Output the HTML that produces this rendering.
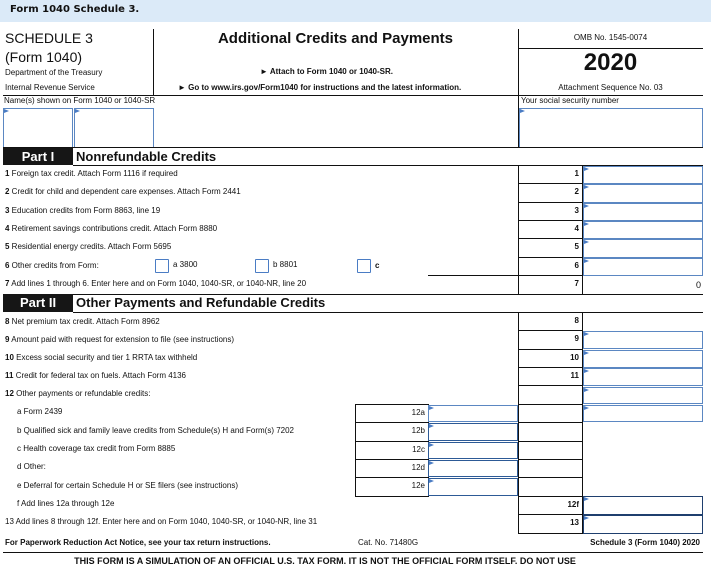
<!DOCTYPE html>
<html><head><meta charset="utf-8"><style>
*{margin:0;padding:0;box-sizing:border-box}
body{width:711px;height:563px;overflow:hidden;background:#fff;position:relative;font-family:"Liberation Sans",Arial,sans-serif;color:#111}
.a{position:absolute;white-space:nowrap}
.t{position:absolute;white-space:nowrap;font-size:8px;line-height:10px}
.h{position:absolute;height:0;border-top:1.5px solid #111}
.v{position:absolute;width:0;border-left:1.5px solid #111}
.in{position:absolute;border:1.5px solid #5b87c2;background:#fff}
.in:before{content:"";position:absolute;left:0;top:0;border-left:5px solid #4a7cc4;border-top:2.5px solid transparent;border-bottom:2.5px solid transparent}
.nc{position:absolute;border:1.5px solid #111;font-size:8px;font-weight:bold;text-align:right;padding-right:3px;line-height:16px}
.cb{position:absolute;width:14px;height:14px;border:1.5px solid #4a7cc4;border-radius:1px}
b{font-weight:bold}
</style></head><body>
<div class="a" style="left:0;top:0;width:711px;height:22px;background:#dbeaf8"></div>
<div class="a" style="left:10px;top:3px;font-family:'DejaVu Sans',sans-serif;font-weight:bold;font-size:10px;line-height:14px">Form 1040 Schedule 3.</div>

<div class="v" style="left:153px;top:29px;height:66px"></div>
<div class="v" style="left:518px;top:29px;height:118px"></div>
<div class="h" style="left:518px;top:48px;width:185px"></div>
<div class="h" style="left:3px;top:95px;width:700px"></div>
<div class="a" style="left:5px;top:30px;font-size:14px;line-height:16px">SCHEDULE 3</div>
<div class="a" style="left:5px;top:49px;font-size:14px;line-height:16px">(Form 1040)</div>
<div class="t" style="left:5px;top:68px">Department of the Treasury</div>
<div class="t" style="left:5px;top:83px">Internal Revenue Service</div>
<div class="a" style="left:153px;width:365px;text-align:center;top:30px;font-size:15px;font-weight:bold;line-height:18px">Additional Credits and Payments</div>
<div class="t" style="left:260px;top:67px;font-weight:bold">► Attach to Form 1040 or 1040-SR.</div>
<div class="t" style="left:178px;top:83px;font-weight:bold">► Go to www.irs.gov/Form1040 for instructions and the latest information.</div>
<div class="t" style="left:518px;width:185px;text-align:center;top:33px">OMB No. 1545-0074</div>
<div class="a" style="left:518px;width:185px;text-align:center;top:50px;font-size:24px;font-weight:bold;line-height:26px">2020</div>
<div class="t" style="left:518px;width:185px;text-align:center;top:83px">Attachment Sequence No. 03</div>
<div class="t" style="left:4px;top:96px">Name(s) shown on Form 1040 or 1040-SR</div>
<div class="t" style="left:521px;top:96px">Your social security number</div>
<div class="in" style="left:3px;top:108px;width:70px;height:40px"></div>
<div class="in" style="left:74px;top:108px;width:80px;height:40px"></div>
<div class="in" style="left:519px;top:108px;width:184px;height:40px"></div>
<div class="h" style="left:3px;top:147px;width:700px"></div>

<div class="a" style="left:3px;top:148px;width:70px;height:17px;background:#161616;color:#fff;font-weight:bold;font-size:13px;line-height:17px;text-align:center">Part I</div>
<div class="a" style="left:76px;top:148px;font-size:13px;font-weight:bold;line-height:17px">Nonrefundable Credits</div>
<div class="h" style="left:73px;top:165px;width:630px"></div>

<div class="t" style="left:5px;top:169px"><b>1</b> Foreign tax credit. Attach Form 1116 if required</div>
<div class="t" style="left:5px;top:187px"><b>2</b> Credit for child and dependent care expenses. Attach Form 2441</div>
<div class="t" style="left:5px;top:206px"><b>3</b> Education credits from Form 8863, line 19</div>
<div class="t" style="left:5px;top:224px"><b>4</b> Retirement savings contributions credit. Attach Form 8880</div>
<div class="t" style="left:5px;top:242px"><b>5</b> Residential energy credits. Attach Form 5695</div>
<div class="t" style="left:5px;top:261px"><b>6</b> Other credits from Form:</div>
<div class="cb" style="left:155px;top:259px"></div><div class="t" style="left:173px;top:260px">a 3800</div>
<div class="cb" style="left:255px;top:259px"></div><div class="t" style="left:273px;top:260px">b 8801</div>
<div class="cb" style="left:357px;top:259px"></div><div class="t" style="left:375px;top:261px;font-weight:bold">c</div>
<div class="t" style="left:5px;top:279px"><b>7</b> Add lines 1 through 6. Enter here and on Form 1040, 1040-SR, or 1040-NR, line 20</div>
<div class="h" style="left:428px;top:275px;width:90px"></div>

<div class="nc" style="left:518px;top:165px;width:65px;height:19px">1</div>
<div class="nc" style="left:518px;top:183px;width:65px;height:20px">2</div>
<div class="nc" style="left:518px;top:202px;width:65px;height:19px">3</div>
<div class="nc" style="left:518px;top:220px;width:65px;height:19px">4</div>
<div class="nc" style="left:518px;top:238px;width:65px;height:20px">5</div>
<div class="nc" style="left:518px;top:257px;width:65px;height:19px">6</div>
<div class="nc" style="left:518px;top:275px;width:65px;height:20px">7</div>
<div class="in" style="left:583px;top:166px;width:120px;height:18px"></div>
<div class="in" style="left:583px;top:184px;width:120px;height:19px"></div>
<div class="in" style="left:583px;top:203px;width:120px;height:18px"></div>
<div class="in" style="left:583px;top:221px;width:120px;height:18px"></div>
<div class="in" style="left:583px;top:239px;width:120px;height:19px"></div>
<div class="in" style="left:583px;top:258px;width:120px;height:18px"></div>
<div class="h" style="left:518px;top:165px;width:185px"></div>
<div class="t" style="left:600px;width:101px;text-align:right;top:280px;font-size:9px">0</div>
<div class="h" style="left:3px;top:294px;width:700px"></div>

<div class="a" style="left:3px;top:294px;width:70px;height:18px;background:#161616;color:#fff;font-weight:bold;font-size:13px;line-height:18px;text-align:center">Part II</div>
<div class="a" style="left:76px;top:294px;font-size:13px;font-weight:bold;line-height:18px">Other Payments and Refundable Credits</div>
<div class="h" style="left:73px;top:312px;width:630px"></div>

<div class="t" style="left:5px;top:317px"><b>8</b> Net premium tax credit. Attach Form 8962</div>
<div class="t" style="left:5px;top:335px"><b>9</b> Amount paid with request for extension to file (see instructions)</div>
<div class="t" style="left:5px;top:353px"><b>10</b> Excess social security and tier 1 RRTA tax withheld</div>
<div class="t" style="left:5px;top:371px"><b>11</b> Credit for federal tax on fuels. Attach Form 4136</div>
<div class="t" style="left:5px;top:389px"><b>12</b> Other payments or refundable credits:</div>
<div class="t" style="left:17px;top:407px">a Form 2439</div>
<div class="t" style="left:17px;top:426px">b Qualified sick and family leave credits from Schedule(s) H and Form(s) 7202</div>
<div class="t" style="left:17px;top:444px">c Health coverage tax credit from Form 8885</div>
<div class="t" style="left:17px;top:462px">d Other:</div>
<div class="t" style="left:17px;top:481px">e Deferral for certain Schedule H or SE filers (see instructions)</div>
<div class="t" style="left:17px;top:499px">f Add lines 12a through 12e</div>
<div class="t" style="left:5px;top:517px">13 Add lines 8 through 12f. Enter here and on Form 1040, 1040-SR, or 1040-NR, line 31</div>

<div class="nc" style="left:518px;top:312px;width:65px;height:19px">8</div>
<div class="nc" style="left:518px;top:330px;width:65px;height:20px">9</div>
<div class="nc" style="left:518px;top:349px;width:65px;height:19px">10</div>
<div class="nc" style="left:518px;top:367px;width:65px;height:19px">11</div>
<div class="nc" style="left:518px;top:385px;width:65px;height:20px"></div>
<div class="nc" style="left:518px;top:404px;width:65px;height:19px"></div>
<div class="nc" style="left:518px;top:422px;width:65px;height:20px"></div>
<div class="nc" style="left:518px;top:441px;width:65px;height:19px"></div>
<div class="nc" style="left:518px;top:459px;width:65px;height:19px"></div>
<div class="nc" style="left:518px;top:477px;width:65px;height:20px"></div>
<div class="nc" style="left:518px;top:496px;width:65px;height:19px">12f</div>
<div class="nc" style="left:518px;top:514px;width:65px;height:20px">13</div>
<div class="h" style="left:583px;top:312px;width:120px"></div>
<div class="in" style="left:583px;top:331px;width:120px;height:18px"></div>
<div class="in" style="left:583px;top:350px;width:120px;height:18px"></div>
<div class="in" style="left:583px;top:368px;width:120px;height:18px"></div>
<div class="in" style="left:583px;top:387px;width:120px;height:17px"></div>
<div class="in" style="left:583px;top:405px;width:120px;height:17px"></div>
<div class="in" style="left:583px;top:496px;width:120px;height:19px;border-color:#1f3f6e"></div>
<div class="in" style="left:583px;top:515px;width:120px;height:19px;border-color:#1f3f6e"></div>

<div class="nc" style="left:355px;top:404px;width:74px;height:19px;font-weight:normal">12a</div>
<div class="nc" style="left:355px;top:422px;width:74px;height:20px;font-weight:normal">12b</div>
<div class="nc" style="left:355px;top:441px;width:74px;height:19px;font-weight:normal">12c</div>
<div class="nc" style="left:355px;top:459px;width:74px;height:19px;font-weight:normal">12d</div>
<div class="nc" style="left:355px;top:477px;width:74px;height:20px;font-weight:normal">12e</div>
<div class="in" style="left:428px;top:405px;width:90px;height:17px"></div>
<div class="in" style="left:428px;top:423px;width:90px;height:18px;border-color:#2d5a96"></div>
<div class="in" style="left:428px;top:442px;width:90px;height:17px;border-color:#2d5a96"></div>
<div class="in" style="left:428px;top:460px;width:90px;height:17px;border-color:#2d5a96"></div>
<div class="in" style="left:428px;top:478px;width:90px;height:18px;border-color:#2d5a96"></div>

<div class="t" style="left:5px;top:538px;font-weight:bold">For Paperwork Reduction Act Notice, see your tax return instructions.</div>
<div class="t" style="left:358px;top:538px">Cat. No. 71480G</div>
<div class="t" style="left:540px;width:160px;text-align:right;top:538px;font-weight:bold">Schedule 3 (Form 1040) 2020</div>
<div class="h" style="left:3px;top:552px;width:700px"></div>
<div class="t" style="left:0;width:650px;text-align:center;top:556px;font-weight:bold;font-size:9px">THIS FORM IS A SIMULATION OF AN OFFICIAL U.S. TAX FORM. IT IS NOT THE OFFICIAL FORM ITSELF. DO NOT USE</div>
</body></html>
